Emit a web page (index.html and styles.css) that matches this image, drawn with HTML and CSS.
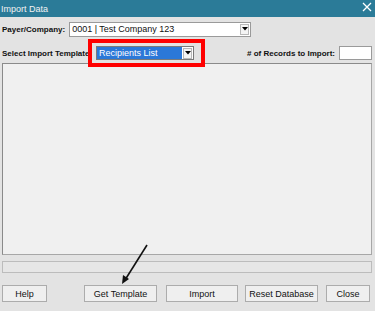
FILE: index.html
```html
<!DOCTYPE html>
<html lang="en">
<head>
  <meta charset="UTF-8" />
  <title>Import Data</title>
  <meta name="viewport" content="width=device-width, initial-scale=1.0"/>
  <link rel="stylesheet" href="styles.css">
</head>
<body>
  <div class="window">
    <div class="titlebar">
      <span class="title">Import Data</span>
      <svg class="close-x" width="10" height="10" viewBox="0 0 10 10">
        <path d="M1 1 L9 9 M9 1 L1 9" stroke="#ffffff" stroke-width="1.3" fill="none"/>
      </svg>
    </div>

    <div class="content">
      <div class="row company-row">
        <label class="lbl">Payer/Company:</label>
        <div class="combo combo-company">
          <span class="combo-text">0001 | Test Company 123</span>
          <span class="combo-btn"><svg width="6" height="4" viewBox="0 0 6 4"><path d="M0 0 H6 L3 3.5 Z" fill="#000"/></svg></span>
        </div>
      </div>

      <div class="row template-row">
        <label class="lbl">Select Import Template:</label>
        <div class="highlight">
          <div class="combo combo-template">
            <span class="combo-text selected">Recipients List</span>
            <span class="combo-btn"><svg width="6" height="4" viewBox="0 0 6 4"><path d="M0 0 H6 L3 3.5 Z" fill="#000"/></svg></span>
          </div>
        </div>
        <label class="lbl records-lbl"># of Records to Import:</label>
        <input type="text" class="records-input" />
      </div>

      <div class="panel"></div>

      <div class="progress"></div>

      <div class="buttons">
        <button class="btn btn-help">Help</button>
        <button class="btn btn-template">Get Template</button>
        <button class="btn btn-import">Import</button>
        <button class="btn btn-reset">Reset Database</button>
        <button class="btn btn-close">Close</button>
      </div>
    </div>

    <svg class="pointer" width="40" height="45" viewBox="0 0 40 45">
      <path d="M34 1 L12 36" stroke="#111" stroke-width="1.6" fill="none"/>
      <path d="M9 40 L10 31 L16 35 Z" fill="#111"/>
    </svg>
  </div>
</body>
</html>
```

FILE: styles.css
```css
body {
  margin: 0;
  font-family: "Liberation Sans", Arial, sans-serif;
  background: #e3e3e3;
}

.window {
  position: relative;
  width: 375px;
  height: 311px;
  overflow: hidden;
  background: #e3e3e3;
}

.titlebar {
  height: 17px;
  background: #2b7b98;
  display: flex;
  align-items: center;
  justify-content: space-between;
  padding: 0 3px 0 1px;
}

.title {
  color: #f2f2f2;
  font-size: 9px;
}

.close-x {
  margin-top: -3px;
}

.content {
  padding: 0 3px 0 2px;
}

.row {
  display: flex;
  align-items: center;
}

.lbl {
  font-size: 8px;
  font-weight: bold;
  color: #111;
}

.company-row {
  margin-top: 4px;
  height: 16px;
}

.combo {
  display: flex;
  align-items: center;
  background: #ffffff;
  border: 1px solid #9a9a9a;
  box-sizing: border-box;
}

.combo-company {
  margin-left: 4px;
  width: 182px;
  height: 15px;
}

.combo-text {
  flex: 1;
  font-size: 9px;
  color: #111;
  padding-left: 2px;
}

.combo-btn {
  width: 9px;
  height: 11px;
  margin-right: 1px;
  border: 1px solid #b8b8b8;
  background: #f4f4f4;
  display: flex;
  align-items: center;
  justify-content: center;
  box-sizing: border-box;
}

.template-row {
  margin-top: 8px;
  height: 16px;
}

.highlight {
  position: relative;
  margin-left: 4px;
}

.highlight::after {
  content: "";
  position: absolute;
  top: -7px;
  left: -8px;
  right: -11px;
  bottom: -7px;
  border: 4px solid #ff0000;
}

.combo-template {
  width: 98px;
  height: 14px;
  border-color: #7a7a7a;
}

.combo-template .combo-text.selected {
  background: #2b78d8;
  color: #ffffff;
  height: 12px;
  line-height: 12px;
  margin-right: 1px;
}

.records-lbl {
  margin-left: auto;
  margin-right: 4px;
}

.records-input {
  width: 33px;
  height: 14px;
  box-sizing: border-box;
  border: 1px solid #9a9a9a;
  background: #ffffff;
  padding: 0;
}

.panel {
  margin-top: 2px;
  height: 192px;
  background: #f0f0f0;
  border: 1px solid #a7a7a7;
  border-top-color: #8a8a8a;
  border-left-color: #8a8a8a;
  box-sizing: border-box;
}

.progress {
  margin-top: 6px;
  height: 12px;
  background: #e6e6e6;
  border: 1px solid #bcbcbc;
  box-sizing: border-box;
}

.buttons {
  margin-top: 12px;
  display: flex;
}

.btn {
  height: 17px;
  font-family: "Liberation Sans", Arial, sans-serif;
  font-size: 9px;
  color: #111;
  background: #efefef;
  border: 1px solid #acacac;
  padding: 0;
  box-sizing: border-box;
}

.btn-help { width: 45px; }
.btn-template { width: 73px; margin-left: 37px; }
.btn-import { width: 72px; margin-left: 9px; }
.btn-reset { width: 73px; margin-left: 7px; }
.btn-close { width: 44px; margin-left: 8px; }

.pointer {
  position: absolute;
  left: 113px;
  top: 244px;
}
```
